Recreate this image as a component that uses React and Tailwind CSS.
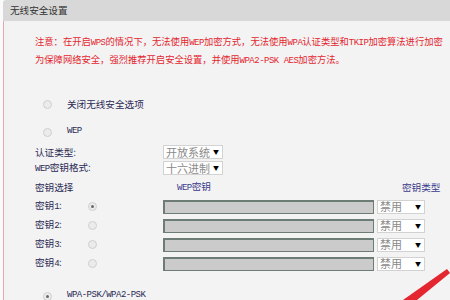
import React from 'react';

// latin runs in the old router pages are a narrow bitmap face
const L = ({ children }) => (
  <span className="font-['Liberation_Mono',monospace] text-[9px] tracking-[-0.5px]">{children}</span>
);

function Radio({ checked }) {
  return (
    <span className="inline-flex w-[9px] h-[9px] rounded-full border border-[#cfcfcf] bg-[#ebebeb] items-center justify-center shrink-0">
      {checked ? <span className="w-[3px] h-[3px] rounded-full bg-[#6a6a6a]" /> : null}
    </span>
  );
}

function Drop({ value, width }) {
  return (
    <div className={`flex items-center justify-between h-[14px] bg-white border border-[#d2d2d2] pl-[2px] pr-[3px] ${width}`}>
      <span className="text-[#8a8a8a] text-[11px] leading-none">{value}</span>
      <span className="text-black text-[6px] leading-none">▼</span>
    </div>
  );
}

const keys = ['1', '2', '3', '4'];

export default function App() {
  return (
    <div className="relative w-[450px] h-[300px] overflow-hidden bg-[#fafafa] font-['Noto_Sans_CJK_SC',sans-serif] text-[9.6px] text-[#2a2a55]">
      <div className="ml-[3px] h-full flex flex-col">
        <div className="h-[21px] shrink-0 bg-[#d8d8d8] rounded-tl-[3px] flex items-center pl-[7px] text-[#333] text-[9.6px]">
          无线安全设置
        </div>
        <div className="flex-1 bg-[#f3f3f3] border-l border-[#e6a8a8] pl-[31px]">
          <div className="pt-[12px] text-[#e3262f] text-[9.3px] leading-[16px] whitespace-nowrap">
            <div>注意：在开启<L>WPS</L>的情况下，无法使用<L>WEP</L>加密方式，无法使用<L>WPA</L>认证类型和<L>TKIP</L>加密算法进行加密</div>
            <div>为保障网络安全，强烈推荐开启安全设置，并使用<L>WPA2-PSK AES</L>加密方法。</div>
          </div>

          <div className="mt-[26px] h-[18px] flex items-center">
            <div className="w-[32px] pl-[8px] flex"><Radio /></div>
            <span>关闭无线安全选项</span>
          </div>

          <div className="mt-[10px] h-[18px] flex items-center">
            <div className="w-[32px] pl-[8px] flex"><Radio /></div>
            <L>WEP</L>
          </div>

          <div className="mt-[3px] h-4 flex items-center">
            <div className="w-[128px]">认证类型:</div>
            <Drop value="开放系统" width="w-[60px]" />
          </div>
          <div className="h-4 flex items-center">
            <div className="w-[128px]"><L>WEP</L>密钥格式:</div>
            <Drop value="十六进制" width="w-[60px]" />
          </div>

          <div className="mt-[3px] h-4 flex items-center">
            <div className="w-[142px]">密钥选择</div>
            <div className="w-[225px] text-[#3b3b8c]"><L>WEP</L>密钥</div>
            <div className="text-[#3b3b8c]">密钥类型</div>
          </div>

          <div className="mt-[2px] flex flex-col">
            {keys.map((k, i) => (
              <div key={k} className="h-[19px] flex items-center">
                <div className="w-[53px]">密钥<L>{k}</L>:</div>
                <div className="w-[75px] flex"><Radio checked={i === 0} /></div>
                <div className="w-[211px] h-[14px] bg-[#cbcbcb] border border-t-2 border-l-2 border-[#6e7c76]" />
                <div className="ml-[3px]"><Drop value="禁用" width="w-[48px]" /></div>
              </div>
            ))}
          </div>

          <div className="mt-[14px] h-[18px] flex items-center">
            <div className="w-[32px] pl-[8px] flex"><Radio checked /></div>
            <L>WPA-PSK/WPA2-PSK</L>
          </div>
        </div>
      </div>

      <svg className="absolute left-[400px] top-[268px]" width="50" height="32" viewBox="0 0 50 32">
        <polygon points="50,5 47,1 3,32 17,32" fill="#e3262f" />
      </svg>
    </div>
  );
}
